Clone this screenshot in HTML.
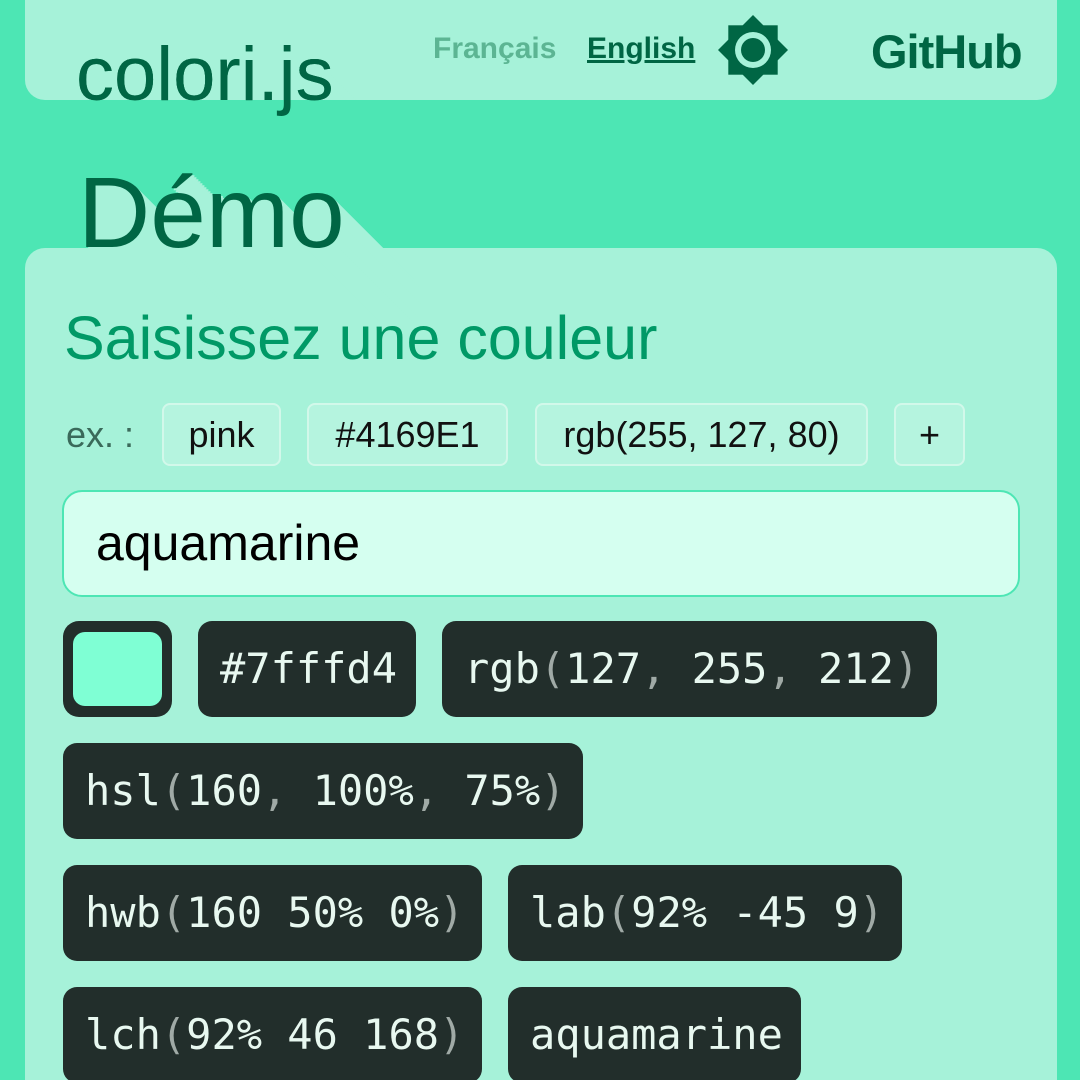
<!DOCTYPE html>
<html style="width:1080px;height:1080px;overflow:hidden"><head><meta charset="utf-8"><style>
*{margin:0;padding:0;box-sizing:border-box}
body{width:1080px;height:1080px;overflow:hidden;background:#4de6b4;font-family:"Liberation Sans",sans-serif;position:relative}
.card{position:absolute;left:25px;width:1032px;background:#a6f2d9;border-radius:20px}
.abs{position:absolute;white-space:nowrap}
.ls{text-shadow:2px 2px #a6f2d9,4px 4px #a6f2d9,6px 6px #a6f2d9,8px 8px #a6f2d9,10px 10px #a6f2d9,12px 12px #a6f2d9,14px 14px #a6f2d9,16px 16px #a6f2d9,18px 18px #a6f2d9,20px 20px #a6f2d9,22px 22px #a6f2d9,24px 24px #a6f2d9,26px 26px #a6f2d9,28px 28px #a6f2d9,30px 30px #a6f2d9,32px 32px #a6f2d9,34px 34px #a6f2d9,36px 36px #a6f2d9,38px 38px #a6f2d9,40px 40px #a6f2d9,42px 42px #a6f2d9,44px 44px #a6f2d9,46px 46px #a6f2d9,48px 48px #a6f2d9,50px 50px #a6f2d9,52px 52px #a6f2d9,54px 54px #a6f2d9,56px 56px #a6f2d9,58px 58px #a6f2d9,60px 60px #a6f2d9,62px 62px #a6f2d9,64px 64px #a6f2d9,66px 66px #a6f2d9,68px 68px #a6f2d9,70px 70px #a6f2d9,72px 72px #a6f2d9,74px 74px #a6f2d9,76px 76px #a6f2d9,78px 78px #a6f2d9,80px 80px #a6f2d9}
.chip{position:absolute;top:403px;height:63px;border:2px solid #d2f8ea;background:#b5f4df;border-radius:8px;font-size:36px;color:#111;display:flex;align-items:center;justify-content:center}
.pill{position:absolute;height:96px;background:#222e2b;border-radius:14px;color:#e8f8f0;font-family:"DejaVu Sans Mono","Liberation Mono",monospace;font-size:42px;line-height:96px;padding-left:22px;white-space:pre}
.g{color:#a0aaa6}
</style></head><body>
<div class="card" style="top:-20px;height:120px"></div>
<div class="card" style="top:248px;height:860px"></div>
<div class="abs ls" style="left:76px;top:30px;font-size:76px;line-height:90px;color:#006644;clip-path:inset(-50px -200px 20px -50px)">colori.js</div>
<div class="abs" style="left:76px;top:30px;font-size:76px;line-height:90px;color:#006644">colori.js</div>
<div class="abs ls" style="left:78px;top:158px;font-size:100px;line-height:110px;color:#006644">Démo</div>
<div class="abs" style="left:433px;top:32px;font-size:30px;font-weight:bold;color:#5cb593">Français</div>
<div class="abs" style="left:587px;top:32px;font-size:30px;font-weight:bold;color:#006644;text-decoration:underline">English</div>
<svg class="abs" style="left:718px;top:15px" width="70" height="70" viewBox="0 0 70 70">
<polygon points="35,0 70,35 35,70 0,35" fill="#006644"/>
<rect x="10.3" y="10.3" width="49.4" height="49.4" fill="#006644"/>
<circle cx="35" cy="35" r="18" fill="#a6f2d9"/><circle cx="35" cy="35" r="12" fill="#006644"/>
</svg>
<div class="abs" style="left:871px;top:24px;font-size:47px;font-weight:bold;color:#006644;letter-spacing:-1px">GitHub</div>
<div class="abs" style="left:64px;top:303px;font-size:61px;color:#009966">Saisissez une couleur</div>
<div class="abs" style="left:66px;top:414px;font-size:36px;color:#3a6a5a">ex. :</div>
<div class="chip" style="left:162px;width:119px">pink</div>
<div class="chip" style="left:307px;width:201px">#4169E1</div>
<div class="chip" style="left:535px;width:333px">rgb(255, 127, 80)</div>
<div class="chip" style="left:894px;width:71px">+</div>
<div class="abs" style="left:62px;top:490px;width:958px;height:107px;border:2px solid #4de6b4;background:#d5fff0;border-radius:20px;font-size:50px;color:#000;padding-left:32px;line-height:103px">aquamarine</div>
<div class="abs" style="left:63px;top:621px;width:109px;height:96px;background:#222e2b;border-radius:16px"><div style="position:absolute;left:10px;top:11px;width:89px;height:74px;background:#7fffd4;border-radius:12px"></div></div>
<div class="pill" style="left:198px;top:621px;width:218px">#7fffd4</div>
<div class="pill" style="left:442px;top:621px;width:495px">rgb<span class="g">(</span>127<span class="g">, </span>255<span class="g">, </span>212<span class="g">)</span></div>
<div class="pill" style="left:63px;top:743px;width:520px">hsl<span class="g">(</span>160<span class="g">, </span>100%<span class="g">, </span>75%<span class="g">)</span></div>
<div class="pill" style="left:63px;top:865px;width:419px">hwb<span class="g">(</span>160 50% 0%<span class="g">)</span></div>
<div class="pill" style="left:508px;top:865px;width:394px">lab<span class="g">(</span>92% -45 9<span class="g">)</span></div>
<div class="pill" style="left:63px;top:987px;width:419px">lch<span class="g">(</span>92% 46 168<span class="g">)</span></div>
<div class="pill" style="left:508px;top:987px;width:293px">aquamarine</div>
</body></html>
